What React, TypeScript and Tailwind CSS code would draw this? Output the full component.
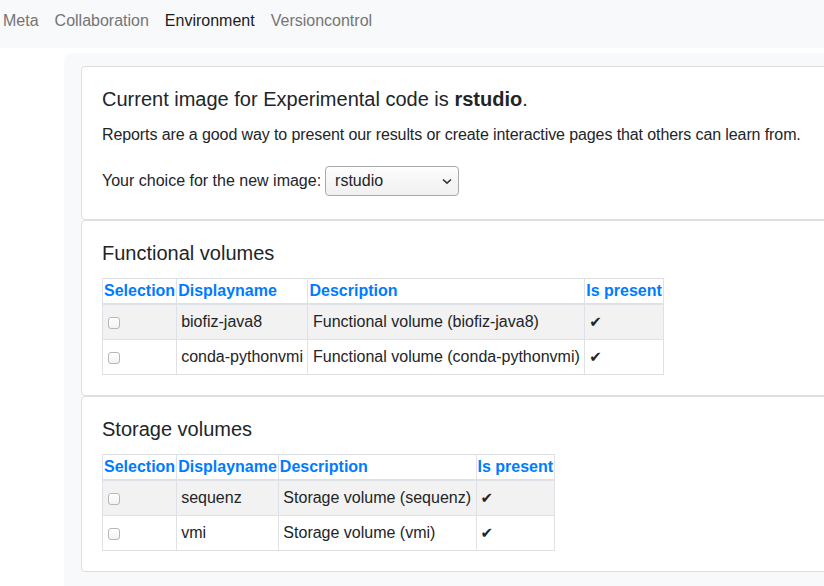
import React from "react";

type Row = { name: string; desc: string };

function Check() {
  return (
    <span className="block mt-[7px] ml-[4px] w-[12px] h-[12px] rounded-[3px] border border-[#b8b8b8] bg-gradient-to-b from-white to-[#f3f3f3]" />
  );
}

function VolumeTable({ rows }: { rows: Row[] }) {
  return (
    <table className="border-collapse border border-[#dee2e6] whitespace-nowrap">
      <thead>
        <tr className="text-[#007bff] font-bold text-left">
          <th className="border border-[#dee2e6] border-b-2 px-[1px] py-0 leading-6">Selection</th>
          <th className="border border-[#dee2e6] border-b-2 px-[1px] py-0 leading-6">Displayname</th>
          <th className="border border-[#dee2e6] border-b-2 px-[1px] py-0 leading-6">Description</th>
          <th className="border border-[#dee2e6] border-b-2 px-[1px] py-0 leading-6">Is present</th>
        </tr>
      </thead>
      <tbody>
        {rows.map((r, i) => (
          <tr key={r.name} className={i % 2 === 0 ? "bg-[#f2f2f2]" : "bg-white"}>
            <td className="border border-[#dee2e6] px-[1px] py-[5px] align-top leading-6">
              <Check />
            </td>
            <td className="border border-[#dee2e6] pl-[4px] pr-[4.5px] py-[5px] leading-6">{r.name}</td>
            <td className="border border-[#dee2e6] pl-[4.5px] pr-[4.5px] py-[5px] leading-6">{r.desc}</td>
            <td className="border border-[#dee2e6] px-[4px] py-[5px] leading-6 font-['DejaVu_Sans',sans-serif] text-[15px]">✔</td>
          </tr>
        ))}
      </tbody>
    </table>
  );
}

export default function App() {
  return (
    <div className="w-[824px] h-[586px] overflow-hidden bg-white text-[#212529] text-base leading-6 font-['Liberation_Sans',Arial,sans-serif]">
      <nav className="h-[48px] bg-[#f8f9fa] flex gap-4 pl-[3px] pt-[9px]">
        <span className="text-[#757575]">Meta</span>
        <span className="text-[#757575]">Collaboration</span>
        <span className="text-[#1c1c1c]">Environment</span>
        <span className="text-[#757575]">Versioncontrol</span>
      </nav>
      <div className="ml-[64px] mt-[5px] w-[820px] h-[600px] bg-[#f8f9fa] rounded-tl-[8px] pt-[13px] pl-[17px]">
        <div className="w-[790px] bg-white border border-[#dfdfdf] rounded-[4px] p-5">
          <h5 className="text-[20px] leading-6 mb-3">
            Current image for Experimental code is <b>rstudio</b>.
          </h5>
          <p className="mb-4 tracking-[-0.1px]">
            Reports are a good way to present our results or create interactive pages that others can learn from.
          </p>
          <div className="h-[36px] flex items-center gap-[4px]">
            <span>Your choice for the new image:</span>
            <div className="w-[134px] h-[30px] border border-[#a9a9a9] rounded-[4px] bg-gradient-to-b from-[#fdfdfd] to-[#f0f0f0] flex items-center justify-between pl-[9px] pr-[6px]">
              <span>rstudio</span>
              <svg width="10" height="7" viewBox="0 0 10 7">
                <path d="M1 1.5 L5 5.2 L9 1.5" fill="none" stroke="#333" strokeWidth="1.6" />
              </svg>
            </div>
          </div>
        </div>
        <div className="w-[790px] bg-white border border-[#dfdfdf] rounded-[4px] p-5">
          <h5 className="text-[20px] leading-6 mb-[13px]">Functional volumes</h5>
          <VolumeTable
            rows={[
              { name: "biofiz-java8", desc: "Functional volume (biofiz-java8)" },
              { name: "conda-pythonvmi", desc: "Functional volume (conda-pythonvmi)" },
            ]}
          />
        </div>
        <div className="w-[790px] bg-white border border-[#dfdfdf] rounded-[4px] p-5">
          <h5 className="text-[20px] leading-6 mb-[13px]">Storage volumes</h5>
          <VolumeTable
            rows={[
              { name: "sequenz", desc: "Storage volume (sequenz)" },
              { name: "vmi", desc: "Storage volume (vmi)" },
            ]}
          />
        </div>
      </div>
    </div>
  );
}
